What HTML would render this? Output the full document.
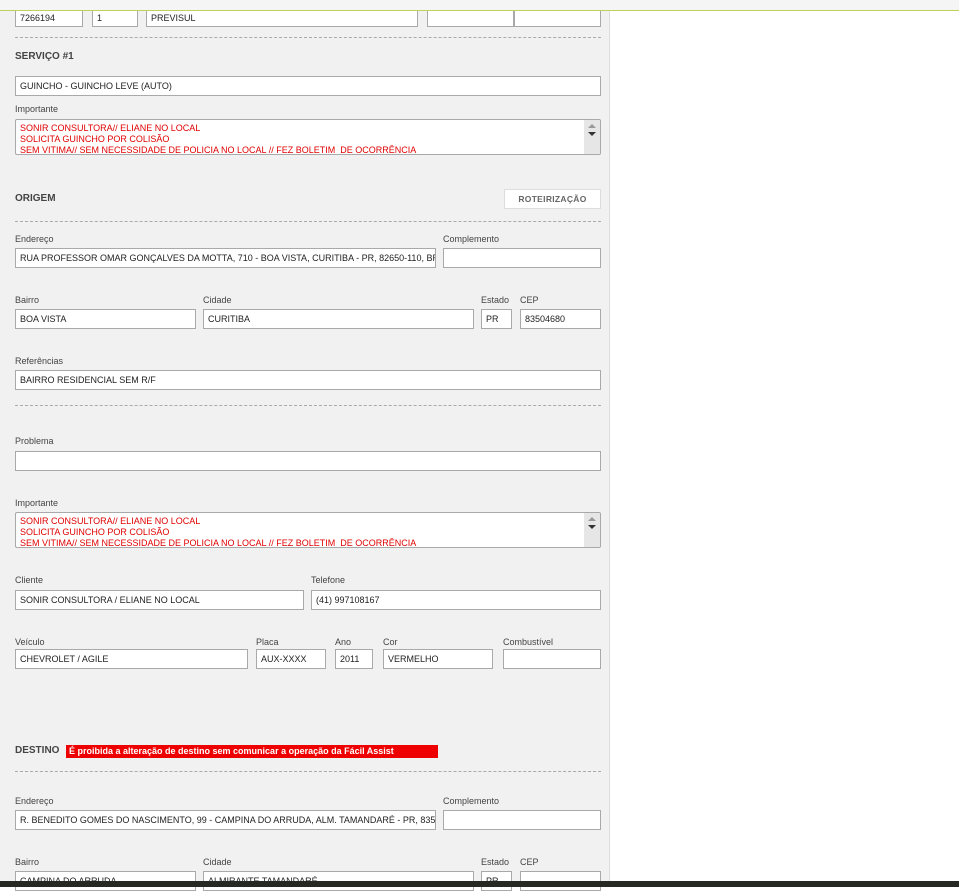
<!DOCTYPE html>
<html><head><meta charset="utf-8"><style>
*{margin:0;padding:0;box-sizing:border-box}
body{width:959px;height:887px;overflow:hidden;background:#fff;position:relative;font-family:"Liberation Sans Narrow","Liberation Sans",sans-serif;font-size:9px;color:#333}
#top{position:absolute;left:0;top:0;width:959px;height:10px;background:#f5f5f5}
#line{position:absolute;left:0;top:10px;width:959px;height:1px;background:#bcd35a}
#panel{position:absolute;left:0;top:11px;width:610px;height:876px;background:#f1f1f1;border-right:1px solid #ddd}
.i{position:absolute;background:#fff;border:1px solid #a9a9a9;height:20px;padding:0 4px;line-height:19px;white-space:nowrap;overflow:hidden;color:#222;font-size:9px}
.l{position:absolute;color:#444;font-size:9px}
.h{position:absolute;font-weight:bold;color:#444;font-size:10px;font-family:"Liberation Sans",sans-serif}
.d{position:absolute;left:15px;width:586px;border-top:1px dashed #aaa}
.t{position:absolute;left:15px;width:586px;height:36px;background:#fff;border:1px solid #a9a9a9;border-radius:2px;color:#e00000;padding:3px 4px;line-height:11px;font-size:9px;white-space:nowrap;overflow:hidden}
.sb{position:absolute;right:0;top:0;width:16px;height:34px;background:#e6e6e6}
.sb:before{content:"";position:absolute;left:4px;top:4px;border:4px solid transparent;border-bottom:4px solid #999;border-top:0}
.sb:after{content:"";position:absolute;left:4px;top:12px;border:4px solid transparent;border-top:4px solid #333;border-bottom:0}
#bot{position:absolute;left:0;top:881px;width:959px;height:6px;background:#252823}
</style></head><body>
<div id="top"></div>
<div id="panel"></div>
<div id="line"></div>
<div class="i" style="left:15px;top:11px;width:68px;height:16px;line-height:14px;border-top:none">7266194</div>
<div class="i" style="left:92px;top:11px;width:46px;height:16px;line-height:14px;border-top:none">1</div>
<div class="i" style="left:146px;top:11px;width:272px;height:16px;line-height:14px;border-top:none">PREVISUL</div>
<div class="i" style="left:427px;top:11px;width:87px;height:16px;border-top:none"></div>
<div class="i" style="left:514px;top:11px;width:87px;height:16px;border-top:none"></div>
<div class="d" style="top:37px"></div>
<div class="h" style="left:15px;top:51px">SERVIÇO #1</div>
<div class="i" style="left:15px;top:76px;width:586px">GUINCHO - GUINCHO LEVE (AUTO)</div>
<div class="l" style="left:15px;top:104px">Importante</div>
<div class="t" style="top:119px">SONIR CONSULTORA// ELIANE NO LOCAL<br>SOLICITA GUINCHO POR COLISÃO<br>SEM VITIMA// SEM NECESSIDADE DE POLICIA NO LOCAL // FEZ BOLETIM&nbsp; DE OCORRÊNCIA<div class="sb"></div></div>
<div class="h" style="left:15px;top:193px">ORIGEM</div>
<div style="position:absolute;left:504px;top:189px;width:97px;height:20px;background:#fff;border:1px solid #ddd;font-family:'Liberation Sans',sans-serif;font-weight:bold;font-size:8.5px;color:#666;text-align:center;line-height:18px;letter-spacing:.3px">ROTEIRIZAÇÃO</div>
<div class="d" style="top:221px"></div>
<div class="l" style="left:15px;top:234px">Endereço</div>
<div class="l" style="left:443px;top:234px">Complemento</div>
<div class="i" style="left:15px;top:248px;width:421px">RUA PROFESSOR OMAR GONÇALVES DA MOTTA, 710 - BOA VISTA, CURITIBA - PR, 82650-110, BRASIL</div>
<div class="i" style="left:443px;top:248px;width:158px"></div>
<div class="l" style="left:15px;top:295px">Bairro</div>
<div class="l" style="left:203px;top:295px">Cidade</div>
<div class="l" style="left:481px;top:295px">Estado</div>
<div class="l" style="left:520px;top:295px">CEP</div>
<div class="i" style="left:15px;top:309px;width:181px">BOA VISTA</div>
<div class="i" style="left:203px;top:309px;width:271px">CURITIBA</div>
<div class="i" style="left:481px;top:309px;width:31px">PR</div>
<div class="i" style="left:520px;top:309px;width:81px">83504680</div>
<div class="l" style="left:15px;top:356px">Referências</div>
<div class="i" style="left:15px;top:370px;width:586px">BAIRRO RESIDENCIAL SEM R/F</div>
<div class="d" style="top:405px"></div>
<div class="l" style="left:15px;top:436px">Problema</div>
<div class="i" style="left:15px;top:451px;width:586px"></div>
<div class="l" style="left:15px;top:498px">Importante</div>
<div class="t" style="top:512px">SONIR CONSULTORA// ELIANE NO LOCAL<br>SOLICITA GUINCHO POR COLISÃO<br>SEM VITIMA// SEM NECESSIDADE DE POLICIA NO LOCAL // FEZ BOLETIM&nbsp; DE OCORRÊNCIA<div class="sb"></div></div>
<div class="l" style="left:15px;top:575px">Cliente</div>
<div class="l" style="left:311px;top:575px">Telefone</div>
<div class="i" style="left:15px;top:590px;width:289px">SONIR CONSULTORA / ELIANE NO LOCAL</div>
<div class="i" style="left:311px;top:590px;width:290px">(41) 997108167</div>
<div class="l" style="left:15px;top:637px">Veículo</div>
<div class="l" style="left:256px;top:637px">Placa</div>
<div class="l" style="left:335px;top:637px">Ano</div>
<div class="l" style="left:383px;top:637px">Cor</div>
<div class="l" style="left:503px;top:637px">Combustível</div>
<div class="i" style="left:15px;top:649px;width:233px">CHEVROLET / AGILE</div>
<div class="i" style="left:256px;top:649px;width:70px">AUX-XXXX</div>
<div class="i" style="left:335px;top:649px;width:38px">2011</div>
<div class="i" style="left:383px;top:649px;width:110px">VERMELHO</div>
<div class="i" style="left:503px;top:649px;width:98px"></div>
<div class="h" style="left:15px;top:745px">DESTINO</div>
<div style="position:absolute;left:66px;top:745px;width:372px;height:13px;background:#ee0000;color:#fff;font-weight:bold;font-size:9px;line-height:13px;padding-left:3px;white-space:nowrap">É proibida a alteração de destino sem comunicar a operação da Fácil Assist</div>
<div class="d" style="top:771px"></div>
<div class="l" style="left:15px;top:796px">Endereço</div>
<div class="l" style="left:443px;top:796px">Complemento</div>
<div class="i" style="left:15px;top:810px;width:421px">R. BENEDITO GOMES DO NASCIMENTO, 99 - CAMPINA DO ARRUDA, ALM. TAMANDARÉ - PR, 83504-680</div>
<div class="i" style="left:443px;top:810px;width:158px"></div>
<div class="l" style="left:15px;top:857px">Bairro</div>
<div class="l" style="left:203px;top:857px">Cidade</div>
<div class="l" style="left:481px;top:857px">Estado</div>
<div class="l" style="left:520px;top:857px">CEP</div>
<div class="i" style="left:15px;top:871px;width:181px">CAMPINA DO ARRUDA</div>
<div class="i" style="left:203px;top:871px;width:271px">ALMIRANTE TAMANDARÉ</div>
<div class="i" style="left:481px;top:871px;width:31px">PR</div>
<div class="i" style="left:520px;top:871px;width:81px"></div>
<div id="bot"></div>
</body></html>
